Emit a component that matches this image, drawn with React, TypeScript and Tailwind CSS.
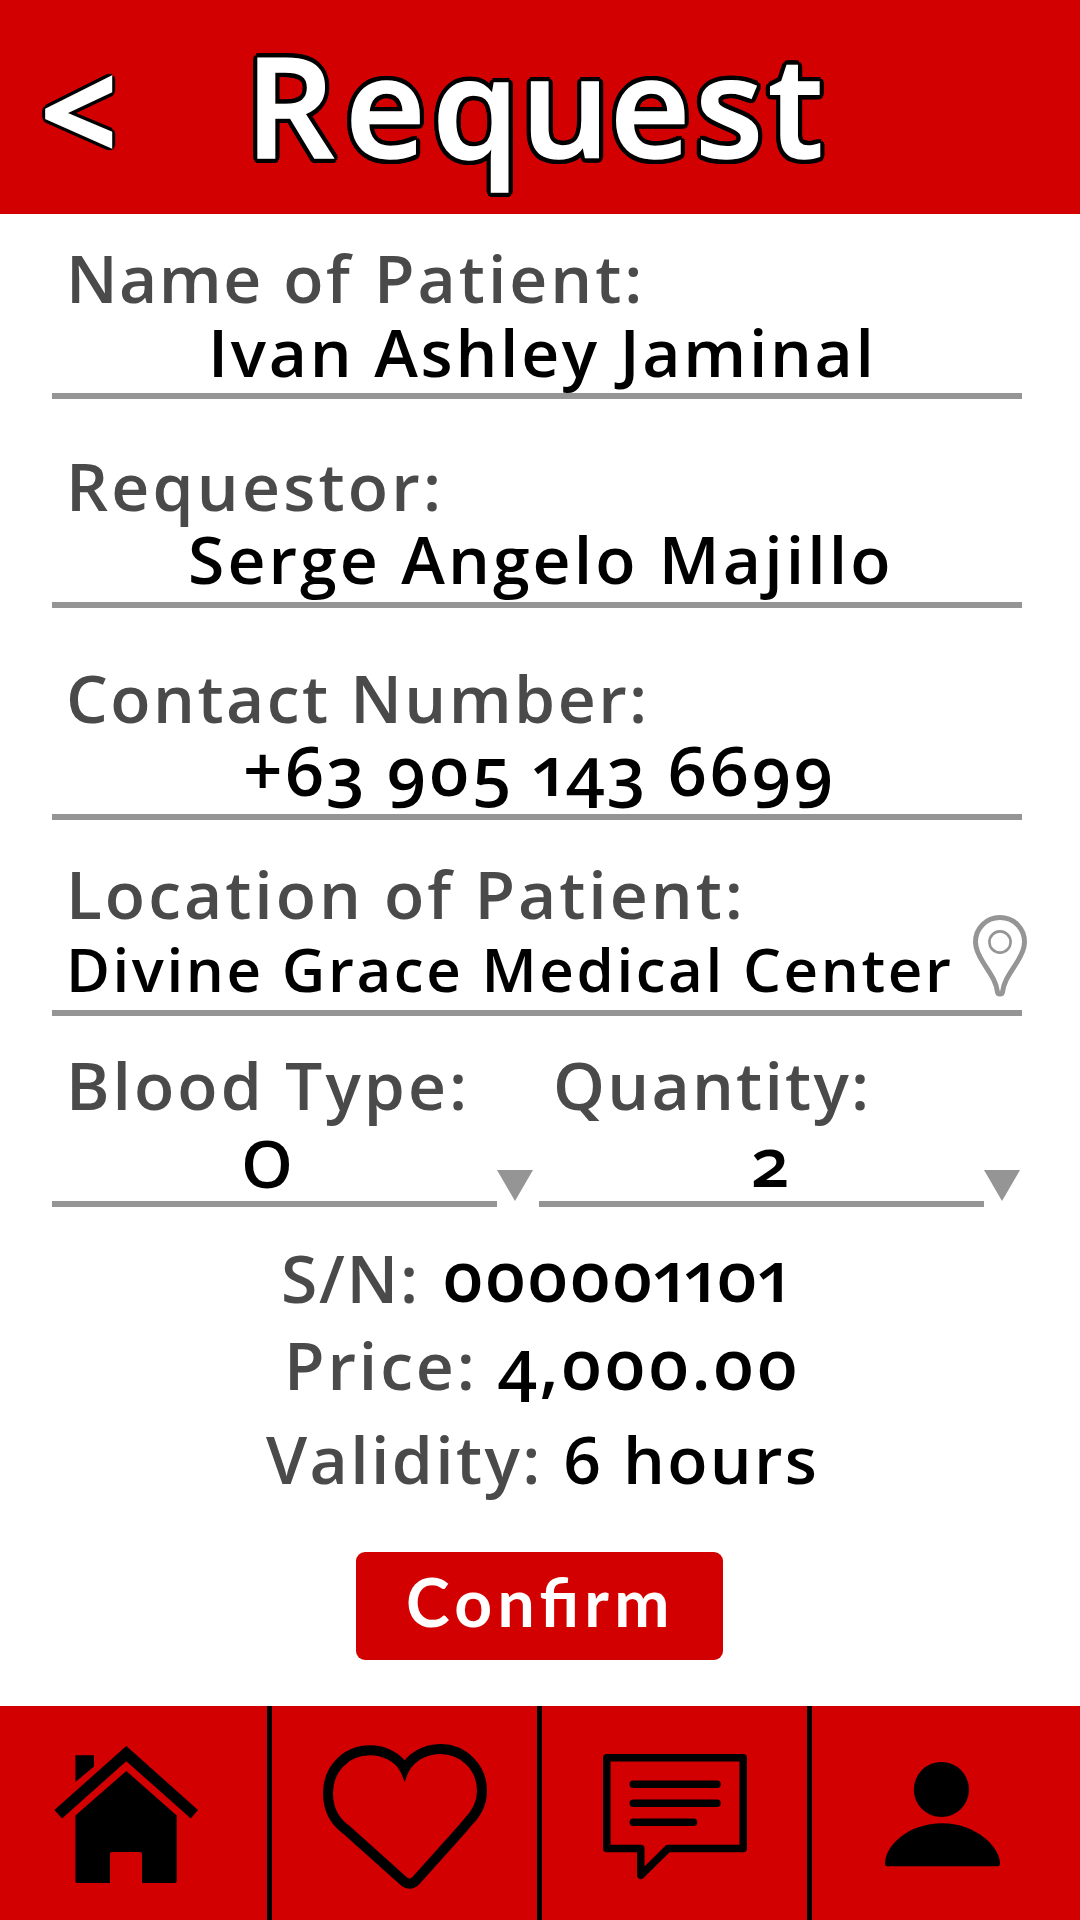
import React from 'react';

function Field({ label, value, className, labelClass, valueClass, children }: {
  label: React.ReactNode;
  value: React.ReactNode;
  className: string;
  labelClass: string;
  valueClass: string;
  children?: React.ReactNode;
}) {
  return (
    <div className={`relative ml-[52px] w-[970px] border-b-[6px] border-[#959595] ${className}`}>
      <div className={`h-[72px] pl-[14px] text-[#4a4a4a] ${labelClass}`}>{label}</div>
      <div className={`h-[72px] text-black ${valueClass}`}>{value}</div>
      {children}
    </div>
  );
}

function Select({ label, value, labelClass, valueClass }: {
  label: string;
  value: string;
  labelClass: string;
  valueClass: string;
}) {
  return (
    <div className="flex items-end">
      <div className="w-[445px] border-b-[6px] border-[#959595] pb-[3px]">
        <div className={`h-[72px] pl-[14px] text-[#4a4a4a] ${labelClass}`}>{label}</div>
        <div className={`mt-[6px] h-[72px] text-black ${valueClass}`}>{value}</div>
      </div>
      <svg className="mb-[6px] h-[31px] w-[36px] shrink-0" viewBox="0 0 36 31" fill="#959595">
        <path d="M0 0H36L18 31Z" />
      </svg>
    </div>
  );
}

function PinIcon() {
  return (
    <svg className="absolute left-[920px] top-[57px] h-[84px] w-[56px]" viewBox="0 0 56 84" fill="none" stroke="#959595">
      <path strokeWidth="5" strokeLinejoin="round" d="M28 3.500C14 3.500 3.500 14.500 3.500 28C3.500 36 7 42 11.500 49C19 61 24 67 25.500 78Q25.700 80 28 80Q30.300 80 30.500 78C32 67 37 61 44.500 49C49 42 52.500 36 52.500 28C52.500 14.500 42 3.500 28 3.500Z" />
      <circle cx="28" cy="28" r="10.600" strokeWidth="2.600" />
    </svg>
  );
}

function HomeIcon() {
  return (
    <svg className="h-[214px] w-[267px]" viewBox="0 1706 267 214">
      <path d="M75.400 1755.300H94V1766.500L75.400 1782Z M126.300 1746L198 1810L190.800 1818.500L126.300 1761.200L62 1818.500L54.400 1810Z" />
      <path d="M126.300 1771L176.700 1815.500V1881Q176.700 1883 174.700 1883H142V1854Q142 1852 140 1852H112Q110 1852 110 1854V1883H77.400Q75.400 1883 75.400 1881V1815.500Z" />
    </svg>
  );
}

function HeartIcon() {
  return (
    <svg className="h-[214px] w-[265px]" viewBox="272 1706 265 214" fill="none" stroke="#000" strokeWidth="10">
      <path d="M404.600 1769C398 1757 384 1750.300 370 1750.300C346 1750.300 328 1769 328 1793C328 1808 334 1820 344 1828C347 1830 348 1831 350 1833L404 1881.500Q410 1886 415.500 1881L463 1828C465 1825.500 466 1824.500 468 1822C477 1813 482 1803 482 1791C482 1767 463 1749 440.500 1749C425 1749 411 1757 404.600 1769Z" />
      <path fill="#000" stroke="none" d="M400 1763L404.600 1760L409 1763L408 1772L404.600 1782.300L401 1772Z" />
    </svg>
  );
}

function ChatIcon() {
  return (
    <svg className="h-[214px] w-[265px]" viewBox="542 1706 265 214" fill="none" stroke="#000" strokeWidth="7.500" strokeLinejoin="round" strokeLinecap="round">
      <path d="M606.800 1757.800H743.200V1848.500H668L640.800 1875.300V1848.500H606.800Z" />
      <path d="M633.300 1784.300H717M633.300 1803.300H717M633.300 1822.300H693.500" />
    </svg>
  );
}

function PersonIcon() {
  return (
    <svg className="h-[214px] w-[268px]" viewBox="812 1706 268 214">
      <ellipse cx="941.400" cy="1789.500" rx="27.600" ry="27.500" />
      <path d="M887.500 1866.200Q885 1866.200 885 1863.500C885 1845 909 1823.200 942 1823.200C976 1823.200 1000 1847 1000 1863.500Q1000 1866.200 997.500 1866.200Z" />
    </svg>
  );
}

export default function App() {
  return (
    <div className="flex h-[1920px] w-[1080px] flex-col overflow-hidden whitespace-pre bg-white font-['Open_Sans',sans-serif] text-[66px] font-semibold leading-[72px] oldstyle-nums proportional-nums">
      <header className="flex h-[214px] shrink-0 bg-[#d20000] text-[140px] text-white [-webkit-text-stroke:1.5px_white] [text-shadow:5px_0_#000,-5px_0_#000,0_5px_#000,0_-5px_#000,4.6px_1.9px_#000,4.6px_-1.9px_#000,-4.6px_1.9px_#000,-4.6px_-1.9px_#000,3.5px_3.5px_#000,-3.5px_3.5px_#000,3.5px_-3.5px_#000,-3.5px_-3.5px_#000,1.9px_4.6px_#000,-1.9px_4.6px_#000,1.9px_-4.6px_#000,-1.9px_-4.6px_#000]">
        <div className="w-[245px] pl-[41px] text-[132px] leading-[218px] [-webkit-text-stroke:4px_white]">{'<'}</div>
        <h1 className="leading-[208px] tracking-[4.7px]">
          <span className="tracking-[10.5px]">R</span>
          <span className="tracking-[6.5px]">e</span>
          <span className="tracking-[1.5px]">q</span>
          <span className="tracking-[0px]">u</span>est
        </h1>
      </header>

      <main className="flex h-[1492px] shrink-0 flex-col">
        <Field
          label={<><span className="tracking-[1.4px]">Name </span><span className="tracking-[2.5px]">of </span><span className="tracking-[3px]">Patient:</span></>}
          value="Ivan Ashley Jaminal" className="mt-[27px] pb-[6px]"
          labelClass="[word-spacing:2px]" valueClass="mt-[2px] pl-[156px] tracking-[2.7px]" />
        <Field label="Requestor:" value="Serge Angelo Majillo" className="mt-[50px] pb-[8px]"
          labelClass="tracking-[3.2px]" valueClass="mt-[1px] pl-[136px] tracking-[3.1px]" />
        <Field label="Contact Number:" value="+63 905 143 6699" className="mt-[53px] pb-[8px]"
          labelClass="tracking-[2.46px]" valueClass="mt-[1px] pl-[191px] text-[69px] leading-[71px] tracking-[2.1px]" />
        <Field label="Location of Patient:" value="Divine Grace Medical Center" className="mt-[37px] pb-[5px]"
          labelClass="tracking-[3px]" valueClass="mt-[4px] pl-[14px] text-[60px] tracking-[2.58px]">
          <PinIcon />
        </Field>

        <div className="ml-[52px] mt-[32px] flex gap-[6px]">
          <Select label="Blood Type:" value="O" labelClass="tracking-[3.06px]" valueClass="pl-[189px]" />
          <Select label="Quantity:" value="2" labelClass="tracking-[2.25px]" valueClass="pl-[212px] text-[69px] leading-[69px]" />
        </div>

        <div className="mt-[34px] flex">
          <span className="w-[442px] pl-[281px] tracking-[1.77px] text-[#4a4a4a]">S/N:</span>
          <span className="h-[72px] text-[70px] leading-[69px] tracking-[0.6px]">000001101</span>
        </div>
        <div className="mt-[15px] flex">
          <span className="w-[497px] pl-[284px] tracking-[2.9px] text-[#4a4a4a]">Price:</span>
          <span className="h-[72px] text-[70px] leading-[70px] tracking-[1.9px]">4,000.00</span>
        </div>
        <div className="mt-[22px] flex">
          <span className="w-[563px] pl-[266px] tracking-[2.4px] text-[#4a4a4a]">Validity:</span>
          <span className="tracking-[2.3px]">6 hours</span>
        </div>

        <button className="ml-[356px] mt-[58px] h-[108px] w-[367px] rounded-[9px] bg-[#d20000] pb-[9px] pl-[50px] text-left font-['Lato',sans-serif] font-bold leading-[99px] tracking-[5.3px] text-white [font-feature-settings:'liga'_1]">
          Confirm
        </button>
      </main>

      <nav className="flex h-[214px] shrink-0 divide-x-[5px] divide-black bg-[#d20000]">
        <div className="w-[272px]"><HomeIcon /></div>
        <div className="w-[270px]"><HeartIcon /></div>
        <div className="w-[270px]"><ChatIcon /></div>
        <div className="w-[268px]"><PersonIcon /></div>
      </nav>
    </div>
  );
}
